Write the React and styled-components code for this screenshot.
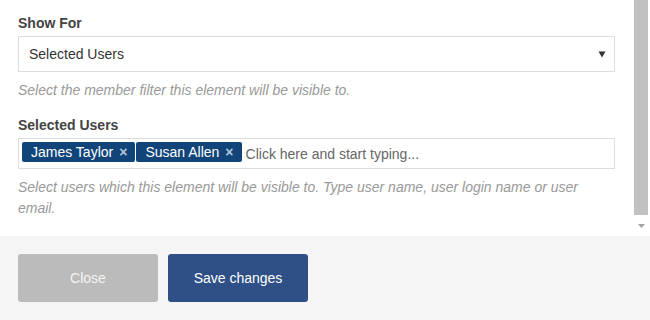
import React from "react";
import styled, { createGlobalStyle } from "styled-components";

const Global = createGlobalStyle`
  html, body { margin: 0; padding: 0; background: #fff; }
  body { font-family: "Liberation Sans", Arial, sans-serif; }
  * { box-sizing: border-box; }
`;

const Modal = styled.div`
  width: 650px;
  height: 320px;
  display: flex;
  flex-direction: column;
  overflow: hidden;
`;

const Body = styled.div`
  height: 236px;
  display: flex;
  background: #fff;
`;

const Form = styled.div`
  flex: 1;
  padding: 14px 18px 0 18px;
`;

const Label = styled.div`
  font-size: 14px;
  font-weight: bold;
  color: #444;
  line-height: 18px;
  margin-bottom: 4px;
`;

const SelectBox = styled.div`
  height: 36px;
  border: 1px solid #ddd;
  display: flex;
  align-items: center;
  justify-content: space-between;
  padding: 0 8px 0 10px;
  font-size: 14px;
  color: #333;
`;

const Help = styled.div`
  margin-top: 8px;
  font-size: 14px;
  font-style: italic;
  color: #999;
  line-height: 21px;
  margin-bottom: ${(p) => p.$mb || 0}px;
`;

const TagBox = styled.div`
  height: 31px;
  border: 1px solid #ddd;
  display: flex;
  align-items: flex-start;
  padding: 3px;
  gap: 1px;
`;

const Tag = styled.span`
  height: 20px;
  background: #11457a;
  color: #fff;
  font-size: 14px;
  line-height: 20px;
  border-radius: 2px;
  padding: 0 8px 0 9px;
  display: inline-flex;
  align-items: center;
  gap: 6px;
`;

const TagX = styled.span`
  font-size: 14px;
  font-weight: bold;
  color: #b8c6d8;
  line-height: 20px;
`;

const Placeholder = styled.span`
  margin: 2px 0 0 3px;
  font-size: 14px;
  color: #666;
  line-height: 20px;
`;

const Scrollbar = styled.div`
  width: 17px;
  display: flex;
  flex-direction: column;
  align-items: flex-start;
  padding-left: 1px;
  background: #fff;
`;

const Thumb = styled.div`
  width: 14px;
  height: 215px;
  background: #c1c1c1;
`;

const ArrowWrap = styled.div`
  width: 14px;
  height: 21px;
  display: flex;
  align-items: center;
  justify-content: center;
`;

const Footer = styled.div`
  flex: 1;
  background: #f5f5f5;
  display: flex;
  align-items: flex-start;
  gap: 10px;
  padding: 18px;
`;

const Button = styled.button`
  width: 140px;
  height: 48px;
  border: none;
  border-radius: 3px;
  font-family: "Liberation Sans", Arial, sans-serif;
  font-size: 14px;
  background: ${(p) => (p.$primary ? "#2e5087" : "#bbbbbb")};
  color: ${(p) => (p.$primary ? "#fff" : "#f4f4f4")};
  padding: 0;
`;

export default function App() {
  return (
    <>
      <Global />
      <Modal>
        <Body>
          <Form>
            <Label>Show For</Label>
            <SelectBox>
              <span>Selected Users</span>
              <svg width="8" height="7" viewBox="0 0 8 7">
                <path d="M0.5 0.5 H7.5 L4 6.5 Z" fill="#333" />
              </svg>
            </SelectBox>
            <Help $mb={15}>Select the member filter this element will be visible to.</Help>
            <Label>Selected Users</Label>
            <TagBox>
              <Tag>
                James Taylor<TagX>×</TagX>
              </Tag>
              <Tag>
                Susan Allen<TagX>×</TagX>
              </Tag>
              <Placeholder>Click here and start typing...</Placeholder>
            </TagBox>
            <Help>
              Select users which this element will be visible to. Type user name, user login name or user
              email.
            </Help>
          </Form>
          <Scrollbar>
            <Thumb />
            <ArrowWrap>
              <svg width="7" height="4" viewBox="0 0 7 4">
                <path d="M0 0 H7 L3.5 4 Z" fill="#a3a3a3" />
              </svg>
            </ArrowWrap>
          </Scrollbar>
        </Body>
        <Footer>
          <Button>Close</Button>
          <Button $primary>Save changes</Button>
        </Footer>
      </Modal>
    </>
  );
}
